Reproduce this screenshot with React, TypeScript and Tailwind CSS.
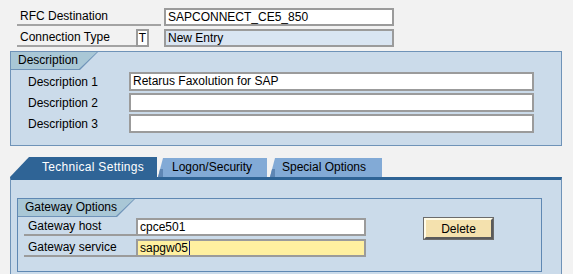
import React from 'react';

const font = "font-['Liberation_Sans',Arial,sans-serif]";

const GroupHeader: React.FC<{ title: string; width: number }> = ({ title, width }) => (
  <div className="relative h-[18px] bg-[#6f93b8] [clip-path:polygon(0_0,100%_0,calc(100%-18px)_100%,0_100%)]" style={{ width }}>
    <div className="absolute inset-0 bottom-[1px] right-[1px] bg-[#a9c7d6] pl-[7px] text-[12px] leading-[17px] text-black [clip-path:polygon(0_0,100%_0,calc(100%-18px)_100%,0_100%)]">
      {title}
    </div>
  </div>
);

const DescRow: React.FC<{ label: string; value?: string }> = ({ label, value }) => (
  <div className="flex h-[19px] items-center">
    <div className="w-[118px] pl-[17px] text-[12px] text-black">{label}</div>
    <div className="h-[19px] w-[405px] border-2 border-[#9b9b9b] bg-white pl-[2px] text-[12px] leading-[15px] text-black">
      {value}
    </div>
  </div>
);

const App: React.FC = () => {
  return (
    <div className={`h-[274px] w-[573px] overflow-hidden bg-[#f2f2f2] ${font}`}>
      {/* Top fields */}
      <div className="flex flex-col gap-[3px] pl-[17px] pt-[8px]">
        <div className="flex h-[18px] items-stretch">
          <div className="w-[144px] border-b-2 border-[#a3a3a3] pl-[3px] text-[12px] leading-[16px] text-black">
            RFC Destination
          </div>
          <div className="ml-[3px] w-[230px] border-2 border-[#9b9b9b] bg-white pl-[2px] text-[12px] leading-[14px] text-black">
            SAPCONNECT_CE5_850
          </div>
        </div>
        <div className="flex h-[18px] items-stretch">
          <div className="w-[119px] border-b-2 border-[#a3a3a3] pl-[3px] text-[12px] leading-[16px] text-black">
            Connection Type
          </div>
          <div className="w-[13px] border-2 border-[#9b9b9b] bg-white text-center text-[12px] leading-[14px] text-black">T</div>
          <div className="ml-[15px] w-[230px] border-2 border-[#9b9b9b] bg-[#d9e5f2] pl-[2px] text-[12px] leading-[14px] text-black">
            New Entry
          </div>
        </div>
      </div>

      {/* Description group */}
      <div className="ml-[10px] mt-[4px] h-[95px] w-[552px] border border-[#6f93b8] bg-[#cbdbea]">
        <GroupHeader title="Description" width={87} />
        <div className="mt-[2px] flex flex-col gap-[2px]">
          <DescRow label="Description 1" value="Retarus Faxolution for SAP" />
          <DescRow label="Description 2" />
          <DescRow label="Description 3" />
        </div>
      </div>

      {/* Tabs */}
      <div className="ml-[10px] mt-[11px] flex h-[20px] items-end">
        <div className="h-[20px] w-[147px] bg-[#2f6496] pl-[32px] text-[12px] leading-[20px] tracking-[0.3px] text-white [clip-path:polygon(19px_0,100%_0,100%_100%,0_100%)]">
          Technical Settings
        </div>
        <div className="relative ml-[1px] h-[19px] w-[109px] bg-[#82aad6] pl-[14px] text-[12px] leading-[19px] text-black [clip-path:polygon(5px_0,100%_0,100%_100%,0_100%)]">
          <div className="absolute bottom-0 left-0 h-[8px] w-[5px] bg-[#5e86b4]" />
          Logon/Security
        </div>
        <div className="relative ml-[3px] h-[19px] w-[112px] bg-[#82aad6] pl-[12px] text-[12px] leading-[19px] text-black [clip-path:polygon(5px_0,100%_0,100%_100%,0_100%)]">
          <div className="absolute bottom-0 left-0 h-[8px] w-[5px] bg-[#5e86b4]" />
          Special Options
        </div>
      </div>

      {/* Tab panel */}
      <div className="ml-[10px] h-[120px] w-[552px] border-x border-t-[3px] border-[#6f93b8] border-t-[#2f6496] bg-[#cbdbea] px-[6px] pt-[18px]">
        <div className="h-[74px] w-[525px] border border-[#5f88b3]">
          <GroupHeader title="Gateway Options" width={117} />
          <div className="mt-[1px] flex">
            <div className="ml-[6px] flex flex-col gap-[3px]">
              <div className="flex h-[18px]">
                <div className="w-[112px] border-b-2 border-[#9b9b9b] pl-[4px] text-[12px] leading-[16px] text-black">
                  Gateway host
                </div>
                <div className="w-[230px] border-2 border-[#9b9b9b] bg-white pl-[2px] text-[12px] leading-[14px] text-black">
                  cpce501
                </div>
              </div>
              <div className="flex h-[18px]">
                <div className="w-[112px] border-b-2 border-[#9b9b9b] pl-[4px] text-[12px] leading-[16px] text-black">
                  Gateway service
                </div>
                <div className="flex w-[230px] items-center border-2 border-[#9b9b9b] bg-[#fff0a0] pl-[2px] text-[12px] leading-[14px] text-black">
                  sapgw05
                  <span className="ml-[1px] h-[14px] w-[1px] bg-[#1a237e]" />
                </div>
              </div>
            </div>
            <button className="ml-[58px] h-[21px] w-[69px] border-2 border-t-[#fffbe8] border-l-[#fffbe8] border-r-[#5a5a5a] border-b-[#5a5a5a] bg-[#f4e1ae] text-[12px] leading-[16px] text-black outline outline-1 outline-[#6b6b6b]">
              Delete
            </button>
          </div>
        </div>
      </div>
    </div>
  );
};

export default App;
